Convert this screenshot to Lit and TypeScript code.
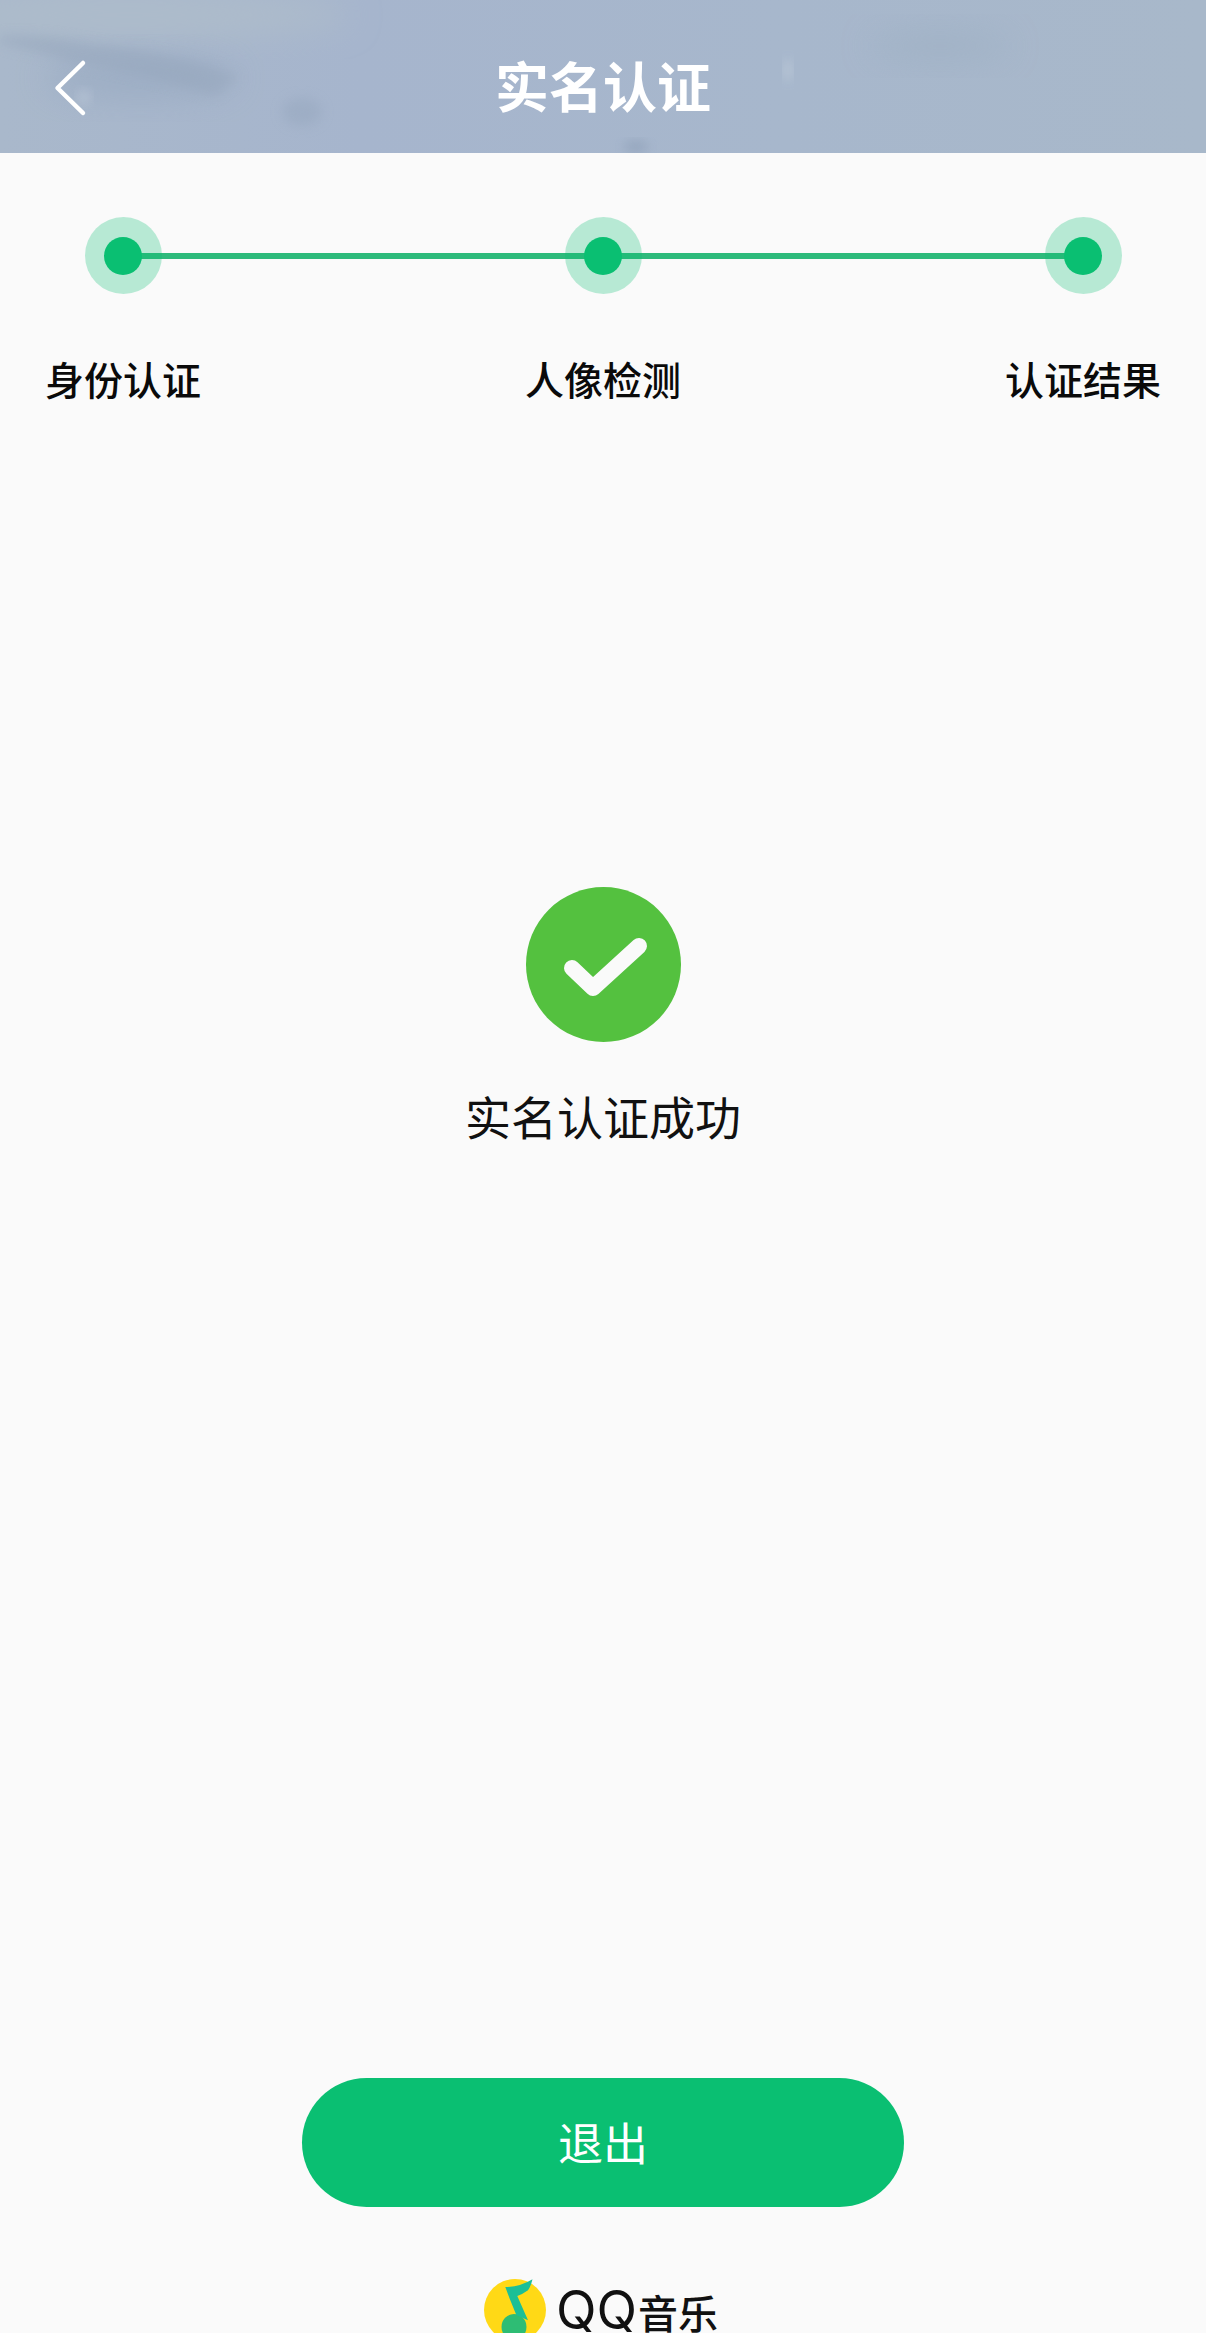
import { LitElement, html, css } from "lit";
import { customElement } from "lit/decorators.js";

const FONT = css`"Noto Sans CJK SC", "Noto Sans", sans-serif`;

@customElement("app-root")
export class AppRoot extends LitElement {
  static styles = css`
    :host {
      display: block;
      font-family: ${FONT};
      background: #fafafa;
      color: #111;
    }
    .page {
      height: 2333px;
      overflow: hidden;
      display: flex;
      flex-direction: column;
      background: #fafafa;
    }
    .header {
      position: relative;
      height: 153px;
      box-sizing: border-box;
      padding-top: 17px;
      flex: none;
      background: #a7b7cc;
      overflow: hidden;
      display: flex;
      align-items: center;
      justify-content: center;
    }
    .texture {
      position: absolute;
      inset: 0;
      width: 100%;
      height: 100%;
    }
    .back {
      position: absolute;
      left: 50px;
      top: 56px;
      width: 40px;
      height: 64px;
    }
    .title {
      position: relative;
      color: #fff;
      font-size: 54px;
      font-weight: 700;
      line-height: 60px;
    }
    .steps {
      position: relative;
      margin-top: 64px;
      padding: 0 43px;
      display: flex;
      justify-content: space-between;
      flex: none;
    }
    .line {
      position: absolute;
      left: 123px;
      right: 123px;
      top: 36px;
      height: 6px;
      background: #2dba7b;
    }
    .step {
      position: relative;
      width: 160px;
      display: flex;
      flex-direction: column;
      align-items: center;
    }
    .halo {
      width: 77px;
      height: 77px;
      border-radius: 50%;
      background: rgba(10, 191, 114, 0.28);
      display: flex;
      align-items: center;
      justify-content: center;
    }
    .dot {
      width: 38px;
      height: 38px;
      border-radius: 50%;
      background: #0abf72;
    }
    .label {
      margin-top: 56px;
      font-size: 39px;
      font-weight: 500;
      line-height: 56px;
      white-space: nowrap;
      color: #0a0a0a;
    }
    .result {
      margin-top: 481px;
      display: flex;
      flex-direction: column;
      align-items: center;
      flex: none;
    }
    .check {
      width: 155px;
      height: 155px;
      display: block;
    }
    .result-text {
      margin-top: 40px;
      font-size: 46px;
      line-height: 66px;
      color: #111;
    }
    .exit {
      margin: 930px auto 0;
      width: 602px;
      height: 129px;
      border-radius: 64.5px;
      background: #0abf72;
      color: #fff;
      font-size: 45px;
      line-height: 60px;
      padding-bottom: 2px;
      box-sizing: border-box;
      display: flex;
      align-items: center;
      justify-content: center;
      flex: none;
    }
    .brand {
      margin: 70px 0 0 484px;
      display: flex;
      align-items: flex-start;
      flex: none;
      height: 55px;
    }
    .logo {
      width: 64px;
      height: 64px;
      display: block;
      flex: none;
    }
    .brand-text {
      margin-left: 8px;
      margin-top: 12px;
      display: flex;
      align-items: baseline;
      color: #111;
      line-height: 43px;
      white-space: nowrap;
    }
    .qq {
      font-family: "Inter", "Noto Sans", sans-serif;
      font-size: 53px;
      font-weight: 400;
    }
    .yin {
      font-size: 40px;
      font-weight: 500;
      margin-left: 1px;
    }
  `;

  render() {
    const steps = ["身份认证", "人像检测", "认证结果"];
    return html`
      <div class="page">
        <header class="header">
          <svg class="texture" viewBox="0 0 1206 153" preserveAspectRatio="none" aria-hidden="true">
            <defs>
              <linearGradient id="base" x1="0" x2="1" y1="0" y2="0">
                <stop offset="0" stop-color="#a9b8cb" />
                <stop offset="0.3" stop-color="#a6b5cd" />
                <stop offset="0.65" stop-color="#a7b7cc" />
                <stop offset="1" stop-color="#a8b8ca" />
              </linearGradient>
              <filter id="b1" x="-50%" y="-50%" width="200%" height="200%"><feGaussianBlur stdDeviation="16" /></filter>
              <filter id="b2" x="-50%" y="-50%" width="200%" height="200%"><feGaussianBlur stdDeviation="6" /></filter>
            </defs>
            <rect width="1206" height="153" fill="url(#base)" />
            <ellipse cx="130" cy="15" rx="220" ry="22" fill="#adbccb" filter="url(#b1)" />
            <ellipse cx="140" cy="78" rx="95" ry="22" fill="#9aabc2" opacity="0.75" filter="url(#b1)" />
            <path d="M0 36 Q50 34 90 44 Q170 52 240 76 L215 96 Q130 70 70 62 Q30 50 0 44Z" fill="#95a6bc" opacity="0.5" filter="url(#b2)" />
            <ellipse cx="302" cy="112" rx="20" ry="14" fill="#97a8bf" opacity="0.55" filter="url(#b2)" />
            <ellipse cx="636" cy="147" rx="12" ry="5" fill="#8b9db6" opacity="0.8" filter="url(#b2)" />
            <ellipse cx="940" cy="46" rx="70" ry="16" fill="#9fb0c4" opacity="0.7" filter="url(#b1)" />
            <ellipse cx="788" cy="70" rx="3" ry="11" fill="#c8d3e0" opacity="0.85" filter="url(#b2)" />
            <ellipse cx="84" cy="97" rx="5" ry="6" fill="#c4cfde" opacity="0.8" filter="url(#b2)" />
          </svg>
          <svg class="back" viewBox="0 0 40 64" aria-hidden="true">
            <path d="M33 7 L7.5 32 L33 57" fill="none" stroke="#fff" stroke-width="4.5" stroke-linecap="round" stroke-linejoin="round" />
          </svg>
          <div class="title">实名认证</div>
        </header>

        <section class="steps">
          <div class="line"></div>
          ${steps.map(
            (s) => html`
              <div class="step">
                <div class="halo"><div class="dot"></div></div>
                <div class="label">${s}</div>
              </div>
            `
          )}
        </section>

        <section class="result">
          <svg class="check" viewBox="0 0 155 155" aria-hidden="true">
            <circle cx="77.5" cy="77.5" r="77.5" fill="#54c13f" />
            <path d="M46 81 L67 101 L113 59" fill="none" stroke="#fafafa" stroke-width="16" stroke-linecap="round" stroke-linejoin="round" />
          </svg>
          <div class="result-text">实名认证成功</div>
        </section>

        <div class="exit">退出</div>

        <div class="brand">
          <svg class="logo" viewBox="0 0 64 64" aria-hidden="true">
            <circle cx="31" cy="33" r="31" fill="#ffd916" />
            <ellipse cx="30" cy="50" rx="12.5" ry="13" fill="#2ebd74" />
            <path d="M21.3 10 Q36 10 48.5 2.3 Q47 9 44 13.3 Q39 17 33.3 19 L44 43.3 L32.3 38 L25.7 21.7 Z" fill="#1cbf96" />
          </svg>
          <div class="brand-text"><span class="qq">QQ</span><span class="yin">音乐</span></div>
        </div>
      </div>
    `;
  }
}
